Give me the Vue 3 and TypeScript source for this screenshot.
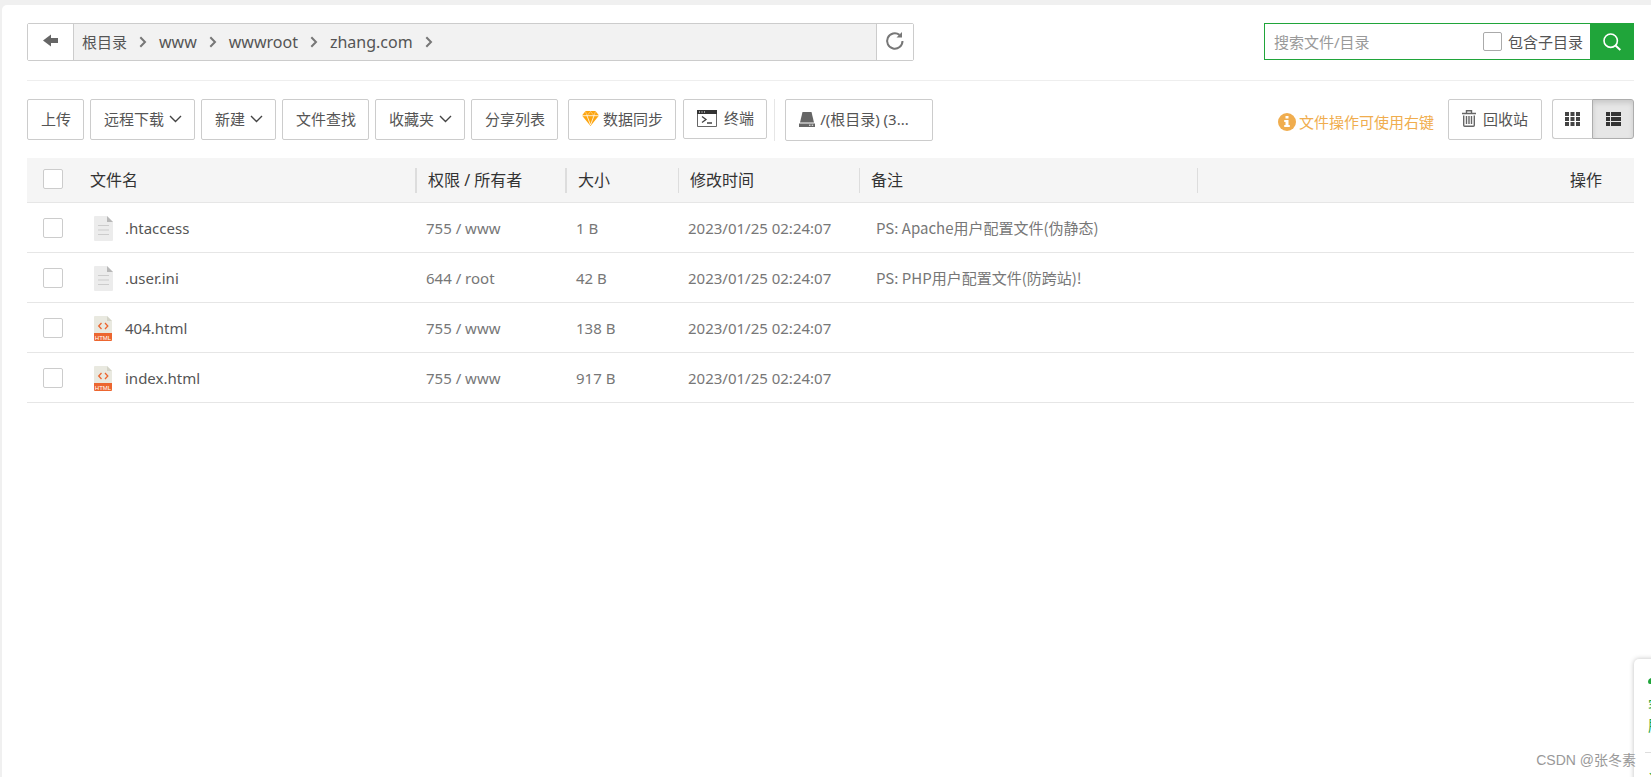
<script setup lang="ts">
import { ref } from 'vue'

interface FileRow {
  name: string
  kind: 'text' | 'html'
  perm: string
  size: string
  time: string
  note: string
}

const crumbs: string[] = ['根目录', 'www', 'wwwroot', 'zhang.com']
const files: FileRow[] = [
  { name: '.htaccess', kind: 'text', perm: '755 / www', size: '1 B', time: '2023/01/25 02:24:07', note: 'PS: Apache用户配置文件(伪静态)' },
  { name: '.user.ini', kind: 'text', perm: '644 / root', size: '42 B', time: '2023/01/25 02:24:07', note: 'PS: PHP用户配置文件(防跨站)!' },
  { name: '404.html', kind: 'html', perm: '755 / www', size: '138 B', time: '2023/01/25 02:24:07', note: '' },
  { name: 'index.html', kind: 'html', perm: '755 / www', size: '917 B', time: '2023/01/25 02:24:07', note: '' },
]
const keyword = ref('')
const withSub = ref(false)
const selected = ref<string[]>([])
</script>

<template>
  <main class="panel">
    <header class="top">
      <nav class="path" aria-label="路径">
        <button class="path-btn back" type="button" aria-label="返回">
          <svg width="16" height="14" viewBox="0 0 16 14"><path d="M0 6.500 8 .5V4h7v5H8v3.500z" fill="#666" /></svg>
        </button>
        <ol class="crumbs">
          <li v-for="(c, i) in crumbs" :key="c">
            <a href="#" :class="{ root: i === 0 }">{{ c }}</a>
            <svg width="8" height="12" viewBox="0 0 8 12"><path d="M1.300 1.200 6 6l-4.700 4.800" fill="none" stroke="#777" stroke-width="2" /></svg>
          </li>
        </ol>
        <button class="path-btn reload" type="button" aria-label="刷新">
          <svg width="20" height="20" viewBox="0 0 20 20"><path d="M17.500 10A7.700 7.700 0 1 1 14.500 3.900" fill="none" stroke="#777" stroke-width="2" /><path d="M17 1v5.500h-5.500z" fill="#777" /></svg>
        </button>
      </nav>
      <form class="search" @submit.prevent>
        <input v-model="keyword" class="search-text" type="text" placeholder="搜索文件/目录" aria-label="搜索文件/目录" />
        <label class="sub"><input v-model="withSub" class="box" type="checkbox" />包含子目录</label>
        <button class="go" type="submit" aria-label="搜索">
          <svg width="18" height="18" viewBox="0 0 18 18"><g fill="none" stroke="#fff" stroke-width="1.600"><circle cx="7.700" cy="7.700" r="6.700" /><path d="m12.500 12.500 4.800 4.500" stroke-width="2" /></g></svg>
        </button>
      </form>
    </header>

    <div class="toolbar">
      <button class="btn" type="button">上传</button>
      <button class="btn" type="button">远程下载<svg class="caret" width="13" height="8" viewBox="0 0 13 8"><path d="m1 1 5.500 5.500L12 1" /></svg></button>
      <button class="btn" type="button">新建<svg class="caret" width="13" height="8" viewBox="0 0 13 8"><path d="m1 1 5.500 5.500L12 1" /></svg></button>
      <button class="btn" type="button">文件查找</button>
      <button class="btn" type="button">收藏夹<svg class="caret" width="13" height="8" viewBox="0 0 13 8"><path d="m1 1 5.500 5.500L12 1" /></svg></button>
      <button class="btn" type="button">分享列表</button>
      <button class="btn sync" type="button">
        <svg width="17" height="15" viewBox="0 0 17 15"><path d="M3.500 0h10L17 4.500 8.500 15 0 4.500z" fill="#fda50f" /><path d="M0 4.700h17M5 4.700 8.500 14 12 4.700" fill="none" stroke="#fff" stroke-width=".8" /><path d="M3.500.5 5 4.700 8.500.5 12 4.700 13.500.5" fill="none" stroke="#fff" stroke-width=".4" /></svg>
        数据同步
      </button>
      <button class="btn term" type="button">
        <svg width="20" height="17" viewBox="0 0 20 17"><path d="M.5.5h19v16H.5z" fill="#fff" stroke="#666" /><path d="M0 0h20v4H0z" fill="#333" /><path d="M2 2h1M4.500 2h1M7 2h1" stroke="#fff" /><path d="m5 6.500 4 3-4 3M10 13h5" fill="none" stroke="#444" stroke-width="1.300" /></svg>
        终端
      </button>
      <span class="rule"></span>
      <button class="btn disk" type="button">
        <svg width="16" height="15" viewBox="0 0 16 15"><path d="M3.500 0h9L15 10.500H1z" fill="#666" /><path d="M0 11.500h16V15H0z" fill="#666" /><path d="M10 13.200h1.500M12.700 13.200h1.500" stroke="#fff" /></svg>
        /(根目录) (3...
      </button>
      <p class="tip">
        <svg width="18" height="18" viewBox="0 0 18 18"><circle cx="9" cy="9" r="9" fill="#f0ad4e" /><path d="M7.500 3h3v2.500h-3zM6.200 7h4.300v5h1.300v2H6.200v-2h1.300V9H6.200z" fill="#fff" /></svg>
        文件操作可使用右键
      </p>
      <button class="btn bin" type="button">
        <svg width="14" height="17" viewBox="0 0 14 17"><path d="M0 3.500h14M4.500 3V.8h5V3M1.700 5.500v9.700q0 1 1 1h8.600q1 0 1-1V5.500M4.500 6v8M7 6v8M9.500 6v8" fill="none" stroke="#666" stroke-width="1.400" /></svg>
        回收站
      </button>
      <div class="views">
        <button type="button" aria-label="图标视图">
          <svg width="15" height="14" viewBox="0 0 15 14"><path d="M0 0h4v4H0zm5.500 0h4v4h-4zM11 0h4v4h-4zM0 5h4v4H0zm5.500 0h4v4h-4zM11 5h4v4h-4zM0 10h4v4H0zm5.500 0h4v4h-4zM11 10h4v4h-4z" fill="#444" /></svg>
        </button>
        <button class="on" type="button" aria-label="列表视图">
          <svg width="15" height="14" viewBox="0 0 15 14"><path d="M0 0h4v4H0zm5 0h10v4H5zM0 5h4v4H0zm5 0h10v4H5zM0 10h4v4H0zm5 0h10v4H5z" fill="#333" /></svg>
        </button>
      </div>
    </div>

    <table class="files">
      <colgroup>
        <col class="c-check" /><col class="c-name" /><col class="c-perm" /><col class="c-size" /><col class="c-time" /><col class="c-note" /><col />
      </colgroup>
      <thead>
        <tr>
          <th><input class="box" type="checkbox" aria-label="全选" /></th>
          <th><span>文件名</span></th>
          <th><span>权限 / 所有者</span></th>
          <th><span>大小</span></th>
          <th><span>修改时间</span></th>
          <th><span>备注</span></th>
          <th class="ops">操作</th>
        </tr>
      </thead>
      <tbody>
        <tr v-for="f in files" :key="f.name">
          <td><input v-model="selected" class="box" type="checkbox" :value="f.name" :aria-label="f.name" /></td>
          <td>
            <a class="file" href="#">
              <svg v-if="f.kind === 'text'" width="19" height="25" viewBox="0 0 19 25"><path d="M1 0h12l6 6v18q0 1-1 1H1q-1 0-1-1V1q0-1 1-1z" fill="#ececec" /><path d="M13 0l6 6h-6z" fill="#b8b8b8" /><path d="M4 9.500h11M4 14h11M4 18.500h11" stroke="#ccc" /></svg>
              <svg v-else width="19" height="25" viewBox="0 0 19 25"><path d="M1 0h12l5 5v12H0V1q0-1 1-1z" fill="#e9e9e0" /><path d="M13 0l5 5h-5z" fill="#d4d4c8" /><path d="M0 17h18v7q0 1-1 1H1q-1 0-1-1z" fill="#ec6630" /><path d="M7.500 7 4.700 10l2.800 3M11 7l2.800 3-2.800 3" fill="none" stroke="#ec6630" stroke-width="1.300" /><text x="9" y="23.500" text-anchor="middle" class="tag">HTML</text></svg>
              {{ f.name }}
            </a>
          </td>
          <td>{{ f.perm }}</td>
          <td>{{ f.size }}</td>
          <td>{{ f.time }}</td>
          <td class="note">{{ f.note }}</td>
          <td></td>
        </tr>
      </tbody>
    </table>

    <aside class="float">
      <a href="#" class="service">
        <svg width="26" height="20" viewBox="0 0 26 20"><path d="M0 7q0-3 3-4 2-3 10-3t10 3q3 1 3 4v0q0 3-4 3V6q-1-4-9-4T5 5v4H2Q0 9 0 7z" fill="#20a53a" /></svg>
        <span>客</span><span>服</span>
      </a>
      <a href="#" class="review">评</a>
    </aside>
    <span class="mark">CSDN @张冬素</span>
  </main>
</template>

<style>
body {
  margin: 0;
  background: #f0f0f0;
}
</style>

<style scoped>
* {
  box-sizing: border-box;
}
.panel {
  position: relative;
  overflow: hidden;
  min-height: calc(100vh - 5px);
  margin: 5px 0 0 2px;
  padding: 18px 17px 0 25px;
  background: #fff;
  border-radius: 5px 0 0 0;
  color: #555;
  font: 15px/20px "Noto Sans", "Noto Sans CJK SC", sans-serif;
}
svg {
  display: block;
  flex: none;
}
button,
input {
  font: inherit;
  color: inherit;
}
button {
  cursor: pointer;
}
a {
  color: inherit;
  text-decoration: none;
}
.top {
  display: flex;
  justify-content: space-between;
  align-items: flex-start;
  padding-bottom: 19px;
  border-bottom: 1px solid #eee;
}
.path {
  display: flex;
  width: 887px;
  height: 38px;
  border: 1px solid #ccc;
  border-radius: 2px;
  background: #f2f2f2;
}
.path-btn {
  display: grid;
  place-items: center;
  padding: 0 0 2px;
  border: 0;
  background: #fff;
}
.back {
  width: 46px;
  border-right: 1px solid #ccc;
}
.reload {
  width: 37px;
  border-left: 1px solid #ccc;
}
.crumbs {
  display: flex;
  flex: 1;
  align-items: center;
  margin: 0;
  padding: 0 0 0 8px;
  font-size: 16px;
  list-style: none;
}
.crumbs li {
  display: flex;
  align-items: center;
  gap: 12px;
  margin-right: 12px;
}
.crumbs .root {
  font-size: 15px;
}
.search {
  display: flex;
  width: 370px;
  height: 37px;
  border: 1px solid #20a53a;
}
.search-text {
  flex: 1;
  min-width: 0;
  padding: 0 9px;
  border: 0;
  outline: 0;
}
.search-text::placeholder {
  color: #999;
}
.sub {
  display: flex;
  align-items: center;
  gap: 6px;
  padding-right: 7px;
}
.box {
  appearance: none;
  display: block;
  width: 20px;
  height: 20px;
  margin: 0;
  border: 1px solid #ccc;
  border-radius: 2px;
  background: #fff;
}
.sub .box {
  width: 19px;
  height: 19px;
  border-color: #aaa;
}
.go {
  display: grid;
  place-items: center;
  width: 43px;
  padding: 0;
  border: 0;
  background: #20a53a;
}
.toolbar {
  display: flex;
  align-items: flex-start;
  gap: 6px;
  padding: 18px 0 17px;
}
.btn {
  display: flex;
  align-items: center;
  gap: 5px;
  height: 41px;
  padding: 0 12px 2px 13px;
  border: 1px solid #ccc;
  border-radius: 2px;
  background: #fff;
  white-space: nowrap;
}
.caret {
  fill: none;
  stroke: #444;
  stroke-width: 1.4;
}
.sync {
  gap: 4px;
  margin-left: 4px;
}
.term {
  gap: 7px;
  height: 40px;
  margin-left: 1px;
}
.rule {
  width: 1px;
  height: 42px;
  margin-left: 1px;
  background: #e6e6e6;
}
.disk {
  width: 148px;
  height: 42px;
  margin-left: 4px;
}
.tip {
  display: flex;
  align-items: center;
  gap: 3px;
  margin: 13px 8px 0 auto;
  color: #f0ad4e;
}
.bin {
  gap: 7px;
  padding: 0 13px 2px;
}
.views {
  display: flex;
  height: 40px;
  margin-left: 4px;
}
.views button {
  display: grid;
  place-items: center;
  width: 40px;
  padding: 0;
  border: 1px solid #ccc;
  border-right: 0;
  border-radius: 3px 0 0 3px;
  background: #fff;
}
.views .on {
  width: 42px;
  border: 1px solid #adadad;
  border-radius: 0 3px 3px 0;
  background: #e6e6e6;
  box-shadow: inset 0 3px 5px rgba(0, 0, 0, 0.125);
}
.files {
  width: 100%;
  table-layout: fixed;
  border-collapse: separate;
  border-spacing: 0;
}
.c-check {
  width: 52px;
}
.c-name {
  width: 338px;
}
.c-perm {
  width: 150px;
}
.c-size {
  width: 112px;
}
.c-time {
  width: 181px;
}
.c-note {
  width: 338px;
}
th {
  height: 45px;
  padding: 0;
  border-bottom: 1px solid #e6e6e6;
  background: #f5f5f5;
  color: #333;
  font-size: 16px;
  font-weight: 400;
  text-align: left;
}
th span {
  display: block;
  padding-left: 11px;
  border-right: 1px solid #ddd;
  line-height: 25px;
}
th:nth-child(2) span,
th:nth-child(3) span {
  border-right-width: 2px;
}
.ops {
  padding-right: 32px;
  text-align: right;
}
td {
  height: 50px;
  padding: 1px 0 0 9px;
  border-bottom: 1px solid #e6e6e6;
  color: #777;
}
th:first-child {
  padding: 0 0 2px 16px;
}
td:first-child {
  padding: 0 0 0 16px;
}
.file {
  display: flex;
  align-items: center;
  gap: 12px;
  padding-left: 6px;
  color: #555;
}
td.note {
  padding-left: 16px;
  font-family: "Noto Sans CJK SC", sans-serif;
}
.tag {
  fill: #fff;
  font: 6px "Liberation Sans", sans-serif;
}
.float {
  position: absolute;
  top: 654px;
  right: -43px;
  width: 60px;
  height: 180px;
  border-radius: 5px;
  background: #fff;
  box-shadow: 0 0 5px rgba(0, 0, 0, 0.25);
  color: #20a53a;
}
.float a {
  display: flex;
  flex-direction: column;
  align-items: flex-start;
  margin-left: 11px;
  padding: 16px 0 0 3px;
}
.float .service {
  height: 94px;
  border-bottom: 1px solid #ddd;
}
.mark {
  position: absolute;
  right: 15px;
  bottom: 7px;
  color: #999;
  font-family: "Liberation Sans", "Noto Sans CJK SC", sans-serif;
  font-size: 14px;
}
</style>
